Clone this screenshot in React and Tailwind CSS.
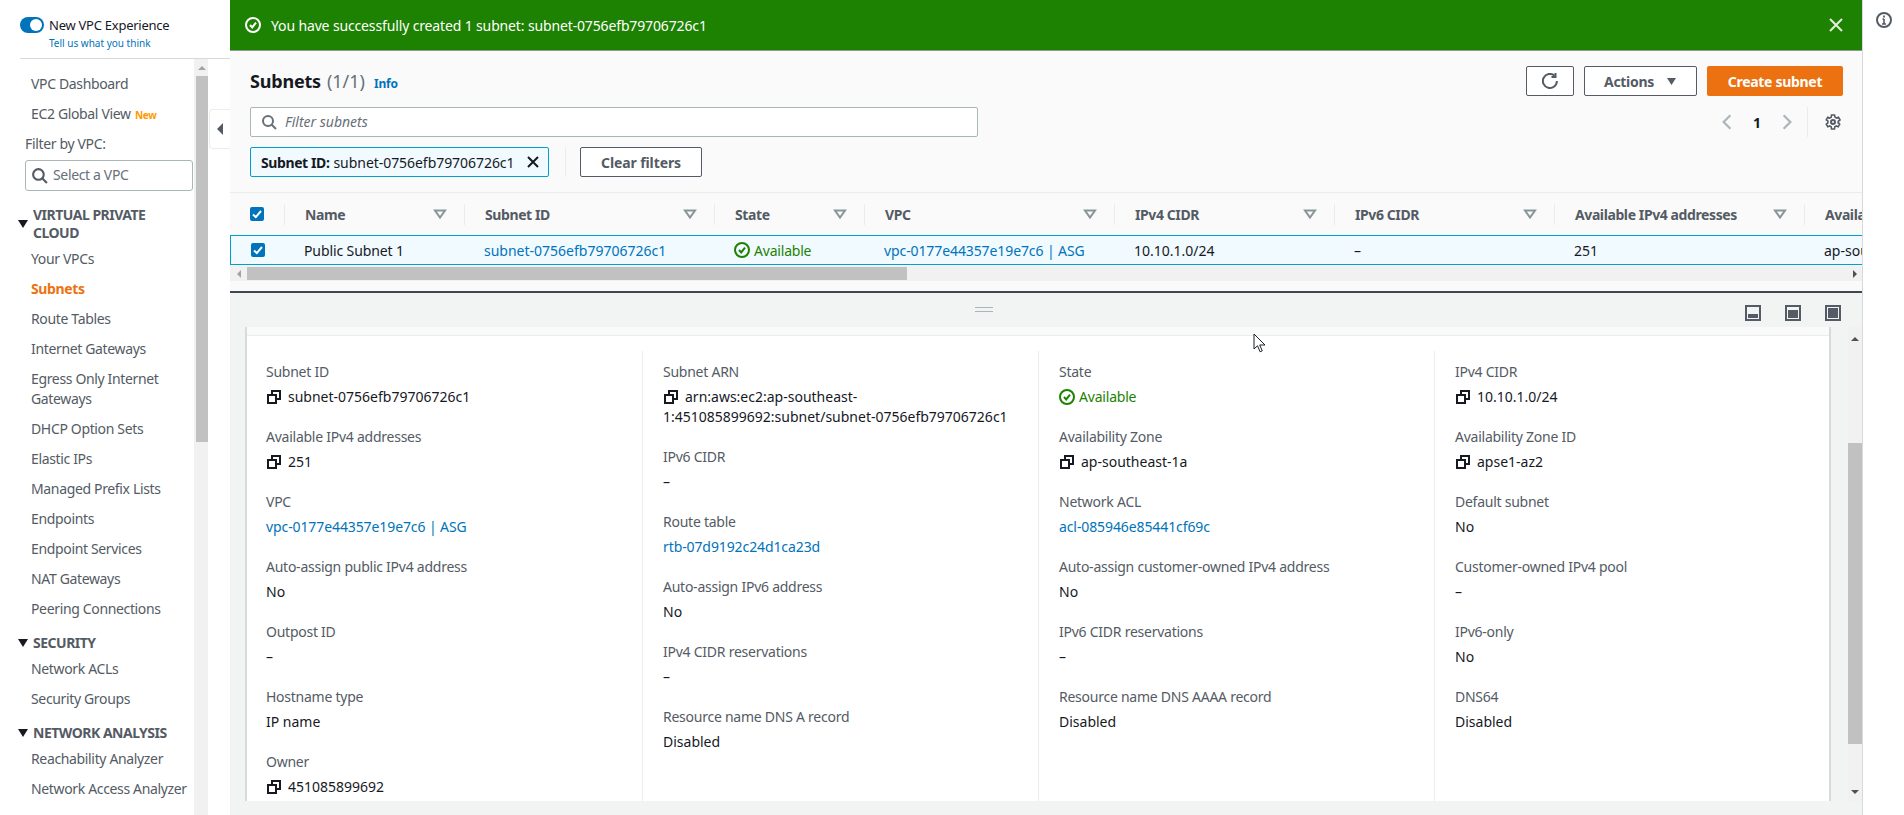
const FONT = "font-['Noto_Sans',sans-serif]";

const navTop = ['VPC Dashboard'];
const vpcLinks = [
    'Your VPCs',
    'Subnets',
    'Route Tables',
    'Internet Gateways',
    'Egress Only Internet Gateways',
    'DHCP Option Sets',
    'Elastic IPs',
    'Managed Prefix Lists',
    'Endpoints',
    'Endpoint Services',
    'NAT Gateways',
    'Peering Connections',
];

const columns = [
    { name: 'Name', w: 'w-[180px]' },
    { name: 'Subnet ID', w: 'w-[250px]' },
    { name: 'State', w: 'w-[150px]' },
    { name: 'VPC', w: 'w-[250px]' },
    { name: 'IPv4 CIDR', w: 'w-[220px]' },
    { name: 'IPv6 CIDR', w: 'w-[220px]' },
    { name: 'Available IPv4 addresses', w: 'w-[250px]' },
];

const details = [
    [
        { label: 'Subnet ID', value: 'subnet-0756efb79706726c1', copy: true },
        { label: 'Available IPv4 addresses', value: '251', copy: true },
        { label: 'VPC', value: 'vpc-0177e44357e19e7c6 | ASG', link: true },
        { label: 'Auto-assign public IPv4 address', value: 'No' },
        { label: 'Outpost ID', value: '–' },
        { label: 'Hostname type', value: 'IP name' },
        { label: 'Owner', value: '451085899692', copy: true },
    ],
    [
        { label: 'Subnet ARN', arn: true },
        { label: 'IPv6 CIDR', value: '–' },
        { label: 'Route table', value: 'rtb-07d9192c24d1ca23d', link: true },
        { label: 'Auto-assign IPv6 address', value: 'No' },
        { label: 'IPv4 CIDR reservations', value: '–' },
        { label: 'Resource name DNS A record', value: 'Disabled' },
    ],
    [
        { label: 'State', status: true },
        { label: 'Availability Zone', value: 'ap-southeast-1a', copy: true },
        { label: 'Network ACL', value: 'acl-085946e85441cf69c', link: true },
        { label: 'Auto-assign customer-owned IPv4 address', value: 'No' },
        { label: 'IPv6 CIDR reservations', value: '–' },
        { label: 'Resource name DNS AAAA record', value: 'Disabled' },
    ],
    [
        { label: 'IPv4 CIDR', value: '10.10.1.0/24', copy: true },
        { label: 'Availability Zone ID', value: 'apse1-az2', copy: true },
        { label: 'Default subnet', value: 'No' },
        { label: 'Customer-owned IPv4 pool', value: '–' },
        { label: 'IPv6-only', value: 'No' },
        { label: 'DNS64', value: 'Disabled' },
    ],
];

function CopyIcon() {
    return (
        <svg viewBox="0 0 16 16" className="w-4 h-4 mr-[6px] shrink-0 inline-block align-[-3px]" fill="none" stroke="#16191f" strokeWidth="2">
            <path d="M2 6h8v8H2z" />
            <path d="M6 5V2h8v8h-3" />
        </svg>
    );
}

function StatusIcon({ color = '#1d8102' }) {
    return (
        <svg viewBox="0 0 16 16" className="w-4 h-4 shrink-0" fill="none" stroke={color} strokeWidth="2">
            <circle cx="8" cy="8" r="7" />
            <path d="M5 8l2.2 2.4L11 5.6" />
        </svg>
    );
}

function FilterCaret() {
    return (
        <svg viewBox="0 0 16 16" className="w-4 h-4" fill="none" stroke="#879596" strokeWidth="2">
            <path d="M3 4.5h10L8 11.5z" />
        </svg>
    );
}

function Checkbox() {
    return (
        <span className="w-[14px] h-[14px] rounded-[2px] bg-[#0073bb] flex items-center justify-center">
            <svg viewBox="0 0 14 14" className="w-[14px] h-[14px]" fill="none" stroke="#fff" strokeWidth="2">
                <path d="M3 7.5l2.8 2.6L11 4" />
            </svg>
        </span>
    );
}

function NavCaret() {
    return (
        <svg viewBox="0 0 10 8" className="w-[10px] h-2 shrink-0" fill="#16191f">
            <path d="M0 0h10L5 8z" />
        </svg>
    );
}

function NavLink({ text, active }) {
    return (
        <div className={`py-[5px] pl-[31px] pr-1 ${active ? 'text-[#ec7211] font-bold' : ''}`}>{text}</div>
    );
}

function NavHeading({ children, className = '' }) {
    return (
        <div className={`relative pl-[33px] pr-2 leading-[18px] font-bold mb-[2px] tracking-[-0.5px] ${className}`}>
            <span className="absolute left-[18px] top-1/2 -mt-1">
                <NavCaret />
            </span>
            {children}
        </div>
    );
}

function Sidebar() {
    return (
        <div className="w-[230px] h-full shrink-0 bg-white flex flex-col text-[14px] leading-5 text-[#545b64] relative tracking-[-0.35px]">
            <div className="h-[59px] ml-5 border-b border-[#d5dbdb] pt-[15px] shrink-0">
                <div className="flex items-center h-5">
                    <span className="w-6 h-4 rounded-full bg-[#0073bb] flex items-center justify-end pr-[2px]">
                        <span className="w-3 h-3 rounded-full bg-white" />
                    </span>
                    <span className="ml-[5px] text-[#16191f] text-[13px] tracking-[-0.25px]">New VPC Experience</span>
                </div>
                <div className="ml-[29px] text-[10px] leading-[14px] mt-[1px] tracking-normal text-[#0073bb]">Tell us what you think</div>
            </div>
            <div className="flex flex-1 min-h-0">
                <div className="w-[194px] shrink-0 pt-[10px]">
                    {navTop.map((t) => (
                        <NavLink key={t} text={t} />
                    ))}
                    <div className="py-[5px] pl-[31px] pr-1">
                        EC2 Global View <span className="ml-[1px] text-[10px] font-bold text-[#ff9900]">New</span>
                    </div>
                    <div className="pt-[4px] pb-[6px] pl-[25px]">Filter by VPC:</div>
                    <div className="ml-[25px] w-[168px] h-[31px] border border-[#aab7b8] rounded-[3px] flex items-center pl-[5px] text-[#687078]">
                        <svg viewBox="0 0 16 16" className="w-[17px] h-[17px] mr-[5px]" fill="none" stroke="#545b64" strokeWidth="2">
                            <circle cx="7" cy="7" r="5" />
                            <path d="M10.5 10.5l4.5 4.5" />
                        </svg>
                        <span className="-mt-[2px]">Select a VPC</span>
                    </div>
                    <NavHeading className="mt-[15px]">VIRTUAL PRIVATE CLOUD</NavHeading>
                    {vpcLinks.map((t) => (
                        <NavLink key={t} text={t} active={t === 'Subnets'} />
                    ))}
                    <NavHeading className="mt-[10px]">SECURITY</NavHeading>
                    <NavLink text="Network ACLs" />
                    <NavLink text="Security Groups" />
                    <NavHeading className="mt-[10px]">NETWORK ANALYSIS</NavHeading>
                    <NavLink text="Reachability Analyzer" />
                    <NavLink text="Network Access Analyzer" />
                </div>
                <div className="w-[14px] h-full bg-[#f1f1f1] flex flex-col items-end">
                    <div className="h-[17px] w-[12px] flex items-center justify-center">
                        <span className="w-0 h-0 border-x-[4px] border-x-transparent border-b-[4px] border-b-[#a3a3a3]" />
                    </div>
                    <div className="w-[12px] h-[366px] bg-[#c1c1c1]" />
                </div>
            </div>
            <div className="absolute left-[209px] top-[109px] w-[21px] h-[40px] bg-white border border-r-0 border-[#eaeded] rounded-l-[4px] flex items-center justify-center">
                <span className="w-0 h-0 border-y-[6px] border-y-transparent border-r-[6px] border-r-[#545b64]" />
            </div>
        </div>
    );
}

function FlashBar() {
    return (
        <div className="h-[51px] shrink-0 bg-[#1d8102] border-b border-[#8d9a94] flex items-center pl-[15px] pr-[18px] text-white text-[14px]">
            <StatusIcon color="#fff" />
            <span className="ml-[10px] flex-1 tracking-[-0.14px]">You have successfully created 1 subnet: subnet-0756efb79706726c1</span>
            <svg viewBox="0 0 16 16" className="w-4 h-4" fill="none" stroke="#e2efdc" strokeWidth="2">
                <path d="M2 2l12 12M14 2L2 14" />
            </svg>
        </div>
    );
}

function TableHeader() {
    return (
        <div className="h-[79px] shrink-0 bg-[#fafafa]">
            <div className="h-[43px] border-t border-[#eaeded] flex items-center font-bold text-[14px] text-[#545b64] overflow-hidden tracking-[-0.4px]">
                <div className="w-[55px] shrink-0 pl-5 flex items-center">
                    <div className="w-[35px] flex items-center justify-between">
                        <Checkbox />
                        <span className="w-px h-[21px] bg-[#eaeded]" />
                    </div>
                </div>
                {columns.map((c) => (
                    <div key={c.name} className={`${c.w} shrink-0 pl-5 flex items-center justify-between`}>
                        <span>{c.name}</span>
                        <span className="flex items-center">
                            <FilterCaret />
                            <span className="ml-[16px] w-px h-[21px] bg-[#eaeded]" />
                        </span>
                    </div>
                ))}
                <div className="pl-5">Availa</div>
            </div>
        </div>
    );
}

function TableRow() {
    return (
        <div className="-mt-[36px] h-[30px] shrink-0 bg-[#f1faff] border-y border-l border-[#00a1c9] flex items-center text-[14px] text-[#16191f] overflow-hidden">
            <div className="w-[53px] shrink-0 pl-5 flex">
                <Checkbox />
            </div>
            <div className="w-[180px] shrink-0 pl-5 tracking-[-0.1px]">Public Subnet 1</div>
            <div className="w-[250px] shrink-0 pl-5 text-[#0073bb]">subnet-0756efb79706726c1</div>
            <div className="w-[150px] shrink-0 pl-5 text-[#1d8102] flex items-center gap-1 tracking-[-0.2px]">
                <StatusIcon />
                Available
            </div>
            <div className="w-[250px] shrink-0 pl-5 text-[#0073bb] tracking-[-0.1px]">vpc-0177e44357e19e7c6 | ASG</div>
            <div className="w-[220px] shrink-0 pl-5">10.10.1.0/24</div>
            <div className="w-[220px] shrink-0 pl-5">–</div>
            <div className="w-[250px] shrink-0 pl-5">251</div>
            <div className="pl-5 whitespace-nowrap">ap-sou</div>
        </div>
    );
}

function HScrollbar() {
    return (
        <div className="mt-px h-[15px] shrink-0 bg-[#f1f1f1] flex items-center">
            <div className="w-[17px] flex justify-center">
                <span className="w-0 h-0 border-y-[4px] border-y-transparent border-r-[4px] border-r-[#a3a3a3]" />
            </div>
            <div className="w-[660px] h-[13px] bg-[#c1c1c1]" />
            <div className="flex-1 flex justify-end pr-[5px]">
                <span className="w-0 h-0 border-y-[4px] border-y-transparent border-l-[4px] border-l-[#505050]" />
            </div>
        </div>
    );
}

function DetailItem({ item }) {
    return (
        <div className="mb-5">
            <div className="text-[#545b64] tracking-[-0.25px]">{item.label}</div>
            <div className="mt-[5px] text-[#16191f]">
                {item.arn && (
                    <>
                        <CopyIcon />
                        arn:aws:ec2:ap-southeast-
                        <br />
                        1:451085899692:subnet/subnet-0756efb79706726c1
                    </>
                )}
                {item.status && (
                    <span className="flex items-center gap-1 text-[#1d8102] tracking-[-0.2px]">
                        <StatusIcon />
                        Available
                    </span>
                )}
                {item.copy && <CopyIcon />}
                {item.link ? <span className="text-[#0073bb] tracking-[-0.1px]">{item.value}</span> : item.value}
            </div>
        </div>
    );
}

function DetailPanel() {
    return (
        <div className="flex-1 min-h-0 flex">
            <div className="ml-[15px] w-[1586px] h-[474px] bg-white border-x-2 border-[#d5dbdb] overflow-hidden">
                <div className="h-[9px] bg-[#fafafa] border-b border-[#eaeded]" />
                <div className="mt-[15px] h-[450px] grid grid-cols-[396px_396px_396px_1fr] text-[14px] leading-5">
                    {details.map((col, i) => (
                        <div
                            key={i}
                            className={`pt-[11px] ${i === 0 ? 'pl-[19px]' : 'pl-5'} ${i < 3 ? 'border-r border-[#eaeded]' : ''}`}
                        >
                            {col.map((item) => (
                                <DetailItem key={item.label} item={item} />
                            ))}
                        </div>
                    ))}
                </div>
            </div>
            <div className="ml-[17px] w-[14px] h-[474px] bg-[#f1f1f1] flex flex-col">
                <div className="h-[116px] flex justify-center pt-[10px]">
                    <span className="w-0 h-0 border-x-[4px] border-x-transparent border-b-[4px] border-b-[#505050]" />
                </div>
                <div className="h-[301px] bg-[#c1c1c1]" />
                <div className="flex-1 flex justify-center items-end pb-[7px]">
                    <span className="w-0 h-0 border-x-[4px] border-x-transparent border-t-[4px] border-t-[#505050]" />
                </div>
            </div>
        </div>
    );
}

function SplitIcon({ fillY }) {
    return (
        <svg viewBox="0 0 16 16" className="w-4 h-4" fill="none">
            <rect x="1" y="1" width="14" height="14" stroke="#545b64" strokeWidth="2" />
            <rect x="3" y={fillY} width="10" height={13 - fillY} fill="#545b64" />
        </svg>
    );
}

export default function App() {
    return (
        <div className={`relative w-[1904px] h-[815px] overflow-hidden flex bg-white ${FONT}`}>
            <Sidebar />
            <div className="w-[1633px] h-full flex flex-col bg-[#f2f3f3] border-r border-[#d5dbdb]">
                <FlashBar />
                <div className="h-[141px] shrink-0 bg-[#fafafa] pt-[15px] pl-5 pr-[19px] text-[14px]">
                    <div className="flex items-center justify-between h-[30px]">
                        <div className="flex items-baseline">
                            <span className="text-[18px] font-bold text-[#16191f] tracking-[-0.2px]">Subnets</span>
                            <span className="ml-[6px] text-[18px] text-[#687078]">(1/1)</span>
                            <span className="ml-[9px] text-[12px] font-bold text-[#0073bb] tracking-[-0.2px]">Info</span>
                        </div>
                        <div className="flex gap-[10px] font-bold text-[#545b64] tracking-[-0.3px]">
                            <button className="w-[48px] h-[30px] bg-white border border-[#545b64] rounded-[2px] flex items-center justify-center">
                                <svg viewBox="0 0 16 16" className="w-4 h-4" fill="none" stroke="#545b64" strokeWidth="2">
                                    <path d="M14.9 8a7 7 0 1 1-2.4-5.3" />
                                    <path d="M13.5 0v4h-4" />
                                </svg>
                            </button>
                            <button className="w-[113px] h-[30px] bg-white border border-[#545b64] rounded-[2px] flex items-center justify-center gap-3">
                                Actions
                                <svg viewBox="0 0 12 10" className="w-[11px] h-[9px]" fill="#545b64">
                                    <path d="M1 1h10L6 9z" />
                                </svg>
                            </button>
                            <button className="w-[136px] h-[30px] bg-[#ec7211] rounded-[2px] text-white">Create subnet</button>
                        </div>
                    </div>
                    <div className="mt-[11px] flex justify-between h-[30px]">
                        <div className="w-[728px] bg-white border border-[#aab7b8] rounded-[2px] flex items-center pl-[10px] text-[#687078] italic">
                            <svg viewBox="0 0 16 16" className="w-4 h-4 mr-[8px]" fill="none" stroke="#687078" strokeWidth="2">
                                <circle cx="7" cy="7" r="5" />
                                <path d="M10.5 10.5l4.5 4.5" />
                            </svg>
                            <span className="-mt-[2px]">Filter subnets</span>
                        </div>
                        <div className="flex items-center pr-[2px]">
                            <svg viewBox="0 0 16 16" className="w-[30px] h-[18px]" fill="none" stroke="#aab7b8" strokeWidth="2">
                                <path d="M11 2L5 8l6 6" />
                            </svg>
                            <span className="w-[30px] text-center font-bold text-[#16191f]">1</span>
                            <svg viewBox="0 0 16 16" className="w-[30px] h-[18px]" fill="none" stroke="#aab7b8" strokeWidth="2">
                                <path d="M5 2l6 6-6 6" />
                            </svg>
                            <span className="ml-[5px] w-px h-[30px] bg-[#eaeded]" />
                            <svg viewBox="0 0 16 16" className="ml-[17px] w-4 h-4" fill="none" stroke="#545b64" strokeWidth="2">
                                <path d="M13.5 8c0-.3 0-.6-.1-.9l1.6-1.2-1.5-2.6-1.9.8a5.5 5.5 0 0 0-1.5-.9L9.5 1h-3l-.3 2.2c-.5.2-1 .5-1.5.9l-1.9-.8L1.3 5.9l1.6 1.2a5.5 5.5 0 0 0 0 1.8l-1.6 1.2 1.5 2.6 1.9-.8c.5.4 1 .7 1.5.9l.3 2.2h3l.3-2.2c.5-.2 1-.5 1.5-.9l1.9.8 1.5-2.6-1.6-1.2c.1-.3.1-.6.1-.9z" strokeWidth="1.6" />
                                <circle cx="8" cy="8" r="2" />
                            </svg>
                        </div>
                    </div>
                    <div className="mt-[10px] flex items-center h-[30px]">
                        <div className="w-[299px] h-[30px] bg-[#f1faff] border border-[#00a1c9] rounded-[2px] flex items-center pl-[10px] text-[#16191f]">
                            <span className="font-bold tracking-[-0.4px]">Subnet ID:</span>
                            <span className="ml-1 flex-1 tracking-[-0.05px]">subnet-0756efb79706726c1</span>
                            <svg viewBox="0 0 16 16" className="w-4 h-4 mr-[7px]" fill="none" stroke="#16191f" strokeWidth="2">
                                <path d="M3 3l10 10M13 3L3 13" />
                            </svg>
                        </div>
                        <span className="ml-[16px] w-px h-[30px] bg-[#eaeded]" />
                        <button className="ml-[14px] w-[122px] h-[30px] bg-white border border-[#545b64] rounded-[2px] font-bold text-[#545b64] tracking-[-0.1px]">
                            Clear filters
                        </button>
                    </div>
                </div>
                <TableHeader />
                <TableRow />
                <HScrollbar />
                <div className="flex-1 min-h-0 flex flex-col">
                    <div className="h-[10px] bg-[#fafafa] shrink-0" />
                    <div className="h-[36px] shrink-0 border-t-[2px] border-[#414750] flex items-center">
                        <div className="ml-[745px] w-[18px] h-[5px] border-y border-[#aab7b8] -mt-[1px]" />
                        <div className="ml-auto mr-[21px] flex gap-6 mt-[6px]">
                            <SplitIcon fillY={9} />
                            <SplitIcon fillY={5} />
                            <SplitIcon fillY={3} />
                        </div>
                    </div>
                    <DetailPanel />
                </div>
            </div>
            <div className="flex-1 flex justify-center pt-3">
                <svg viewBox="0 0 16 16" className="w-4 h-4" fill="none" stroke="#545b64" strokeWidth="2">
                    <circle cx="8" cy="8" r="7" />
                    <path d="M8 7v5M6 12h4M6.5 7H8" strokeWidth="1.6" />
                    <path d="M8 3.6v1.8" strokeWidth="1.8" />
                </svg>
            </div>
            <svg viewBox="0 0 14 20" className="absolute left-[1253px] top-[333px] w-[14px] h-5" fill="#fff" stroke="#1b1f24" strokeWidth="1">
                <path d="M1 1v15l3.5-3.2 2.6 6 2.2-1-2.6-5.8H12z" />
            </svg>
        </div>
    );
}
